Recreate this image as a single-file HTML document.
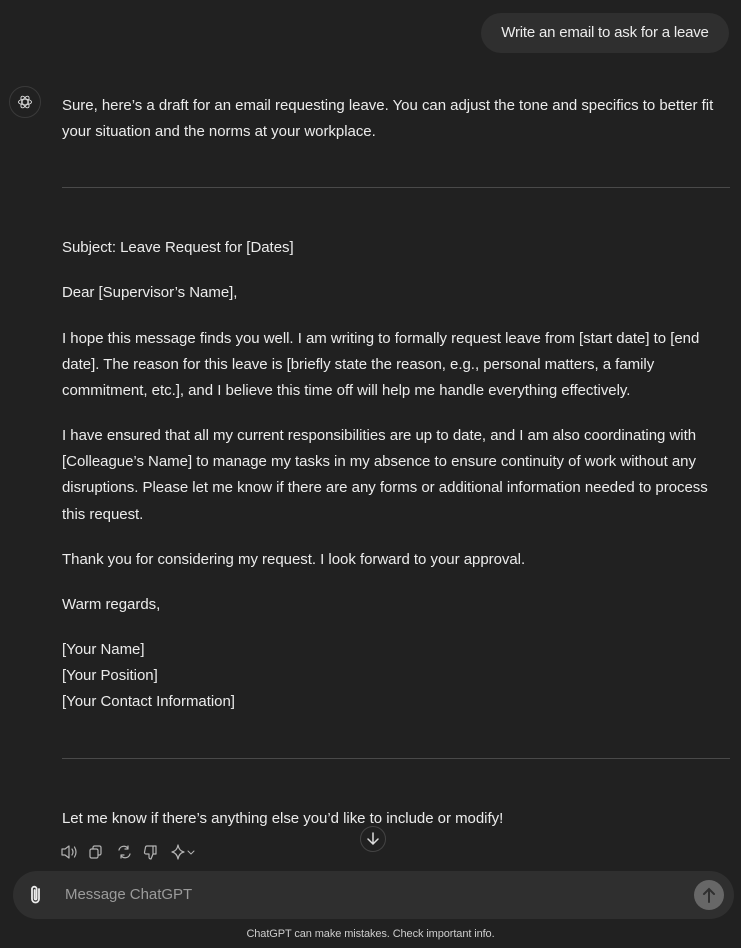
<!DOCTYPE html>
<html><head><meta charset="utf-8"><style>
*{margin:0;padding:0;box-sizing:border-box}
body{width:741px;height:948px;background:#212121;color:#ececec;font-family:"Liberation Sans",sans-serif;font-size:15px;letter-spacing:-0.03px;position:relative;overflow:hidden}
.l{position:absolute;left:62px;white-space:nowrap;line-height:20px}
.bub{position:absolute;left:481px;top:13px;width:248px;height:40px;background:#2f2f2f;border-radius:20px;line-height:40px;text-align:center;letter-spacing:-0.2px}
.hr{position:absolute;left:62px;width:668px;height:1px;background:#4a4a4a}
.av{position:absolute;left:9px;top:86px;width:32px;height:32px;border:1px solid #3a3a3a;border-radius:50%}
.inp{position:absolute;left:13px;top:871px;width:721px;height:48px;background:#2f2f2f;border-radius:24px}
</style></head><body>
<div class="bub">Write an email to ask for a leave</div>
<div class="av"><svg width="30" height="30" viewBox="0 0 30 30"><g fill="none" stroke="#ddd" stroke-width="0.9"><ellipse cx="15" cy="15" rx="6.5" ry="2.8" transform="rotate(60 15 15)"/><ellipse cx="15" cy="15" rx="6.5" ry="2.8" transform="rotate(-60 15 15)"/><ellipse cx="15" cy="15" rx="6.5" ry="2.8"/></g></svg></div>
<div class="l" style="top:96px">Sure, here’s a draft for an email requesting leave. You can adjust the tone and specifics to better fit</div>
<div class="l" style="top:122px">your situation and the norms at your workplace.</div>
<div class="hr" style="top:187px"></div>
<div class="l" style="top:238px">Subject: Leave Request for [Dates]</div>
<div class="l" style="top:283px">Dear [Supervisor’s Name],</div>
<div class="l" style="top:329px">I hope this message finds you well. I am writing to formally request leave from [start date] to [end</div>
<div class="l" style="top:355px">date]. The reason for this leave is [briefly state the reason, e.g., personal matters, a family</div>
<div class="l" style="top:381px">commitment, etc.], and I believe this time off will help me handle everything effectively.</div>
<div class="l" style="top:426px">I have ensured that all my current responsibilities are up to date, and I am also coordinating with</div>
<div class="l" style="top:452px">[Colleague’s Name] to manage my tasks in my absence to ensure continuity of work without any</div>
<div class="l" style="top:478px">disruptions. Please let me know if there are any forms or additional information needed to process</div>
<div class="l" style="top:505px">this request.</div>
<div class="l" style="top:550px">Thank you for considering my request. I look forward to your approval.</div>
<div class="l" style="top:595px">Warm regards,</div>
<div class="l" style="top:640px">[Your Name]</div>
<div class="l" style="top:666px">[Your Position]</div>
<div class="l" style="top:692px">[Your Contact Information]</div>
<div class="hr" style="top:758px"></div>
<div class="l" style="top:809px">Let me know if there’s anything else you’d like to include or modify!</div>
<svg style="position:absolute;left:58px;top:842px" width="150" height="20" viewBox="0 0 150 20"><g fill="none" stroke="#b4b4b4" stroke-width="1.2" stroke-linejoin="round" stroke-linecap="round">
<path d="M4 7h3l4-3v12l-4-3H4z M14 7q2 3 0 6 M16.5 5q3 5 0 10"/>
<rect x="32" y="7" width="8" height="9" rx="1.5"/><path d="M35 7V5.5A1.5 1.5 0 0 1 36.5 4h5A1.5 1.5 0 0 1 43 5.5v6a1.5 1.5 0 0 1-1.5 1.5H40"/>
<path d="M61 8a5 5 0 0 1 9-1.5M72 12a5 5 0 0 1-9 1.5M70 4v3h-3M63 16v-3h3"/>
<path d="M89 4h6v8l-2 5q-2 0-2-2v-3h-3a1.5 1.5 0 0 1-1.5-1.7l1-5A1.5 1.5 0 0 1 89 4zM95 4h3v8h-3"/>
<path d="M120 3q1 6 6 7q-5 1-6 7q-1-6-6-7q5-1 6-7z"/><path d="M130 9l3 3 3-3" stroke-width="1"/></g></svg>
<div style="position:absolute;left:360px;top:826px;width:26px;height:26px;border:1px solid #444;border-radius:50%;background:#212121"><svg width="24" height="24" viewBox="0 0 24 24"><path d="M12 6v11M7 12l5 5 5-5" fill="none" stroke="#ddd" stroke-width="1.5" stroke-linecap="round"/></svg></div>
<div class="inp"></div>
<svg style="position:absolute;left:26px;top:883px" width="20" height="24" viewBox="0 0 20 24"><path d="M13 6v10a3.5 3.5 0 0 1-7 0V6a2.3 2.3 0 0 1 4.6 0v9.5a1 1 0 0 1-2 0V7" fill="none" stroke="#ececec" stroke-width="1.8" stroke-linecap="round"/></svg>
<div style="position:absolute;left:65px;top:885px;color:#9b9b9b;font-size:15px;line-height:20px">Message ChatGPT</div>
<div style="position:absolute;left:694px;top:880px;width:30px;height:30px;border-radius:50%;background:#676767"><svg width="30" height="30" viewBox="0 0 30 30"><path d="M15 22V9M10 14l5-5 5 5" fill="none" stroke="#2f2f2f" stroke-width="2" stroke-linecap="round"/></svg></div>
<div style="position:absolute;left:0;width:741px;top:928px;text-align:center;font-size:11px;color:#cdcdcd;letter-spacing:-0.1px">ChatGPT can make mistakes. Check important info.</div>
</body></html>
